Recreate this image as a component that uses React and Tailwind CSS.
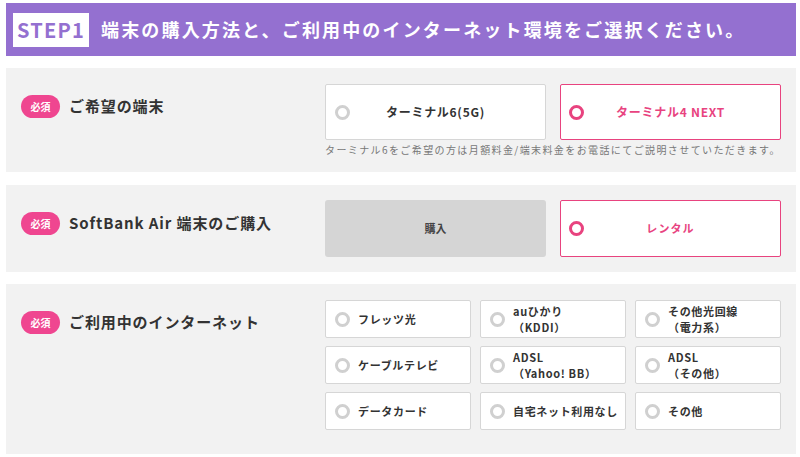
const PINK = "text-[#e8437f]";

const internetOptions = [
  ["フレッツ光"],
  ["auひかり", "（KDDI）"],
  ["その他光回線", "（電力系）"],
  ["ケーブルテレビ"],
  ["ADSL", "（Yahoo! BB）"],
  ["ADSL", "（その他）"],
  ["データカード"],
  ["自宅ネット利用なし"],
  ["その他"],
];

function Radio({ checked }) {
  return checked ? (
    <span className="block h-[15px] w-[15px] shrink-0 rounded-full border-[3.5px] border-[#e8437f] bg-white" />
  ) : (
    <span className="block h-[15px] w-[15px] shrink-0 rounded-full border-[3px] border-[#d0d0d0] bg-white" />
  );
}

function Label({ children }) {
  return (
    <div className="flex w-[304px] shrink-0 items-center gap-[9px] self-start pt-[27px]">
      <span className="flex h-[23px] w-[39px] items-center justify-center rounded-full bg-[#ef4690] text-[10px] font-bold text-white">
        必須
      </span>
      <span className="text-[15px] font-bold tracking-[0.06em] text-[#333]">{children}</span>
    </div>
  );
}

function WideOption({ text, checked }) {
  return (
    <div
      className={
        checked
          ? "flex h-[56px] items-center rounded-[2px] border-[1.5px] border-[#e8437f] bg-white px-[8px]"
          : "flex h-[56px] items-center rounded-[2px] border border-[#d6d6d6] bg-white px-[9px]"
      }
    >
      <Radio checked={checked} />
      <span
        className={
          "flex-1 text-center text-[12px] font-bold tracking-[0.06em] " + (checked ? PINK : "text-[#333]")
        }
      >
        {text}
      </span>
      <span className="w-[15px]" />
    </div>
  );
}

export default function App() {
  return (
    <div className="h-[457px] w-[800px] overflow-hidden bg-white pl-[6px] pr-[4px] pt-[3px] font-['Noto_Sans_CJK_JP','Noto_Sans',sans-serif]">
      <header className="flex h-[53px] items-center bg-[#9470d0] pl-[7px]">
        <div className="flex h-[34px] w-[76px] items-center justify-center bg-white text-[20px] font-bold tracking-[0.06em] text-[#9470d0]">
          STEP1
        </div>
        <h1 className="ml-[12px] text-[18px] font-bold tracking-[0.12em] text-white">
          端末の購入方法と、ご利用中のインターネット環境をご選択ください。
        </h1>
      </header>

      <section className="mt-[12px] flex h-[104px] bg-[#f2f2f2] px-[15px]">
        <Label>ご希望の端末</Label>
        <div className="flex-1 pt-[16px]">
          <div className="grid grid-cols-2 gap-[14px]">
            <WideOption text="ターミナル6(5G)" />
            <WideOption text="ターミナル4 NEXT" checked />
          </div>
          <p className="mt-[2px] text-[10px] tracking-[0.14em] text-[#777]">
            ターミナル6をご希望の方は月額料金/端末料金をお電話にてご説明させていただきます。
          </p>
        </div>
      </section>

      <section className="mt-[13px] flex h-[87px] bg-[#f2f2f2] px-[15px]">
        <Label>SoftBank Air 端末のご購入</Label>
        <div className="flex-1 pt-[15px]">
          <div className="grid grid-cols-2 gap-[14px]">
            <div className="flex h-[57px] items-center justify-center rounded-[3px] bg-[#d5d5d5] text-[11px] font-bold text-[#444]">
              購入
            </div>
            <div className="flex h-[57px] items-center rounded-[2px] border-[1.5px] border-[#e8437f] bg-white px-[8px]">
              <Radio checked />
              <span className={"flex-1 text-center text-[11px] font-bold tracking-[0.1em] " + PINK}>レンタル</span>
              <span className="w-[15px]" />
            </div>
          </div>
        </div>
      </section>

      <section className="mt-[12px] flex h-[170px] bg-[#f2f2f2] px-[15px]">
        <Label>ご利用中のインターネット</Label>
        <div className="flex-1 pt-[16px]">
          <div className="grid grid-cols-3 gap-x-[9px] gap-y-[8px]">
            {internetOptions.map((lines, i) => (
              <div
                key={i}
                className="flex h-[38px] items-center gap-[8px] rounded-[2px] border border-[#d6d6d6] bg-white pl-[9px]"
              >
                <Radio />
                <div className="text-[11px] font-bold leading-[16px] tracking-[0.06em] text-[#333]">
                  {lines.map((l) => (
                    <div key={l}>{l}</div>
                  ))}
                </div>
              </div>
            ))}
          </div>
        </div>
      </section>
    </div>
  );
}
